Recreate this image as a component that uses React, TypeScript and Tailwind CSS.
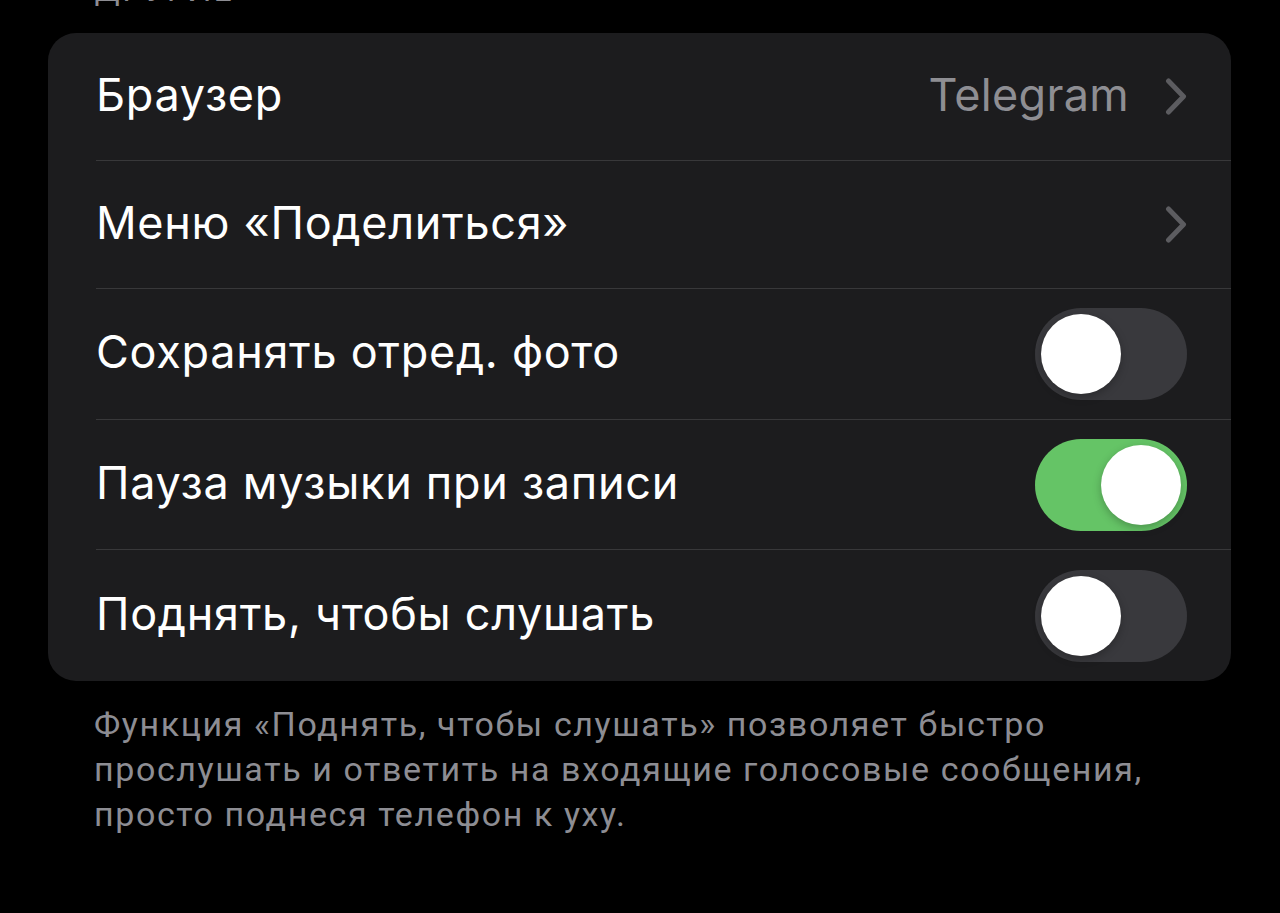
function Chevron() {
  return (
    <svg width="22" height="37" viewBox="0 0 22 37" fill="none" className="ml-[36px]">
      <path d="M3.5 3l15 15.5-15 15.5" stroke="#5c5c60" strokeWidth="5" strokeLinecap="round" strokeLinejoin="round" />
    </svg>
  )
}

function Toggle({ on }: { on?: boolean }) {
  return (
    <div
      className={`flex h-[92px] w-[152px] items-center rounded-full p-[6px] ${
        on ? 'justify-end bg-[#65c466]' : 'justify-start bg-[#39393d]'
      }`}
    >
      <div className="h-[80px] w-[80px] rounded-full bg-white shadow-[0_3px_8px_rgba(0,0,0,0.25)]" />
    </div>
  )
}

function Row({
  title,
  height,
  last,
  children,
}: {
  title: string
  height: string
  last?: boolean
  children?: React.ReactNode
}) {
  return (
    <div className="pl-[48px]">
      <div
        className={`flex items-center justify-between pr-[44px] ${height} ${
          last ? '' : 'border-b border-[#38383a]'
        }`}
      >
        <span className="-mt-[4px] text-[45px] tracking-[0.7px] text-white">{title}</span>
        <div className="flex items-center">{children}</div>
      </div>
    </div>
  )
}

export default function App() {
  return (
    <div className="min-h-[913px] w-[1280px] overflow-hidden bg-black font-['Inter','Roboto',sans-serif]">
      <p className="mt-[-28px] pl-[94px] text-[32px] uppercase leading-[36px] tracking-[2px] text-[#8d8d93]">
        Другие
      </p>
      <div className="mx-[48px] mt-[25px] w-[1183px] overflow-hidden rounded-[28px] bg-[#1c1c1e]">
        <Row title="Браузер" height="h-[128px]">
          <span className="-mt-[4px] text-[45px] tracking-[0.3px] text-[#8e8e93]">Telegram</span>
          <Chevron />
        </Row>
        <Row title="Меню «Поделиться»" height="h-[128px]">
          <Chevron />
        </Row>
        <Row title="Сохранять отред. фото" height="h-[131px]">
          <Toggle />
        </Row>
        <Row title="Пауза музыки при записи" height="h-[130px]">
          <Toggle on />
        </Row>
        <Row title="Поднять, чтобы слушать" height="h-[131px]" last>
          <Toggle />
        </Row>
      </div>
      <p className="mt-[21px] w-[1180px] pl-[94px] font-['Roboto',sans-serif] text-[34px] leading-[45px] tracking-[1.6px] text-[#8d8d93]">
        Функция «Поднять, чтобы слушать» позволяет быстро
        <br />
        прослушать и ответить на входящие голосовые сообщения,
        <br />
        просто поднеся телефон к уху.
      </p>
    </div>
  )
}
